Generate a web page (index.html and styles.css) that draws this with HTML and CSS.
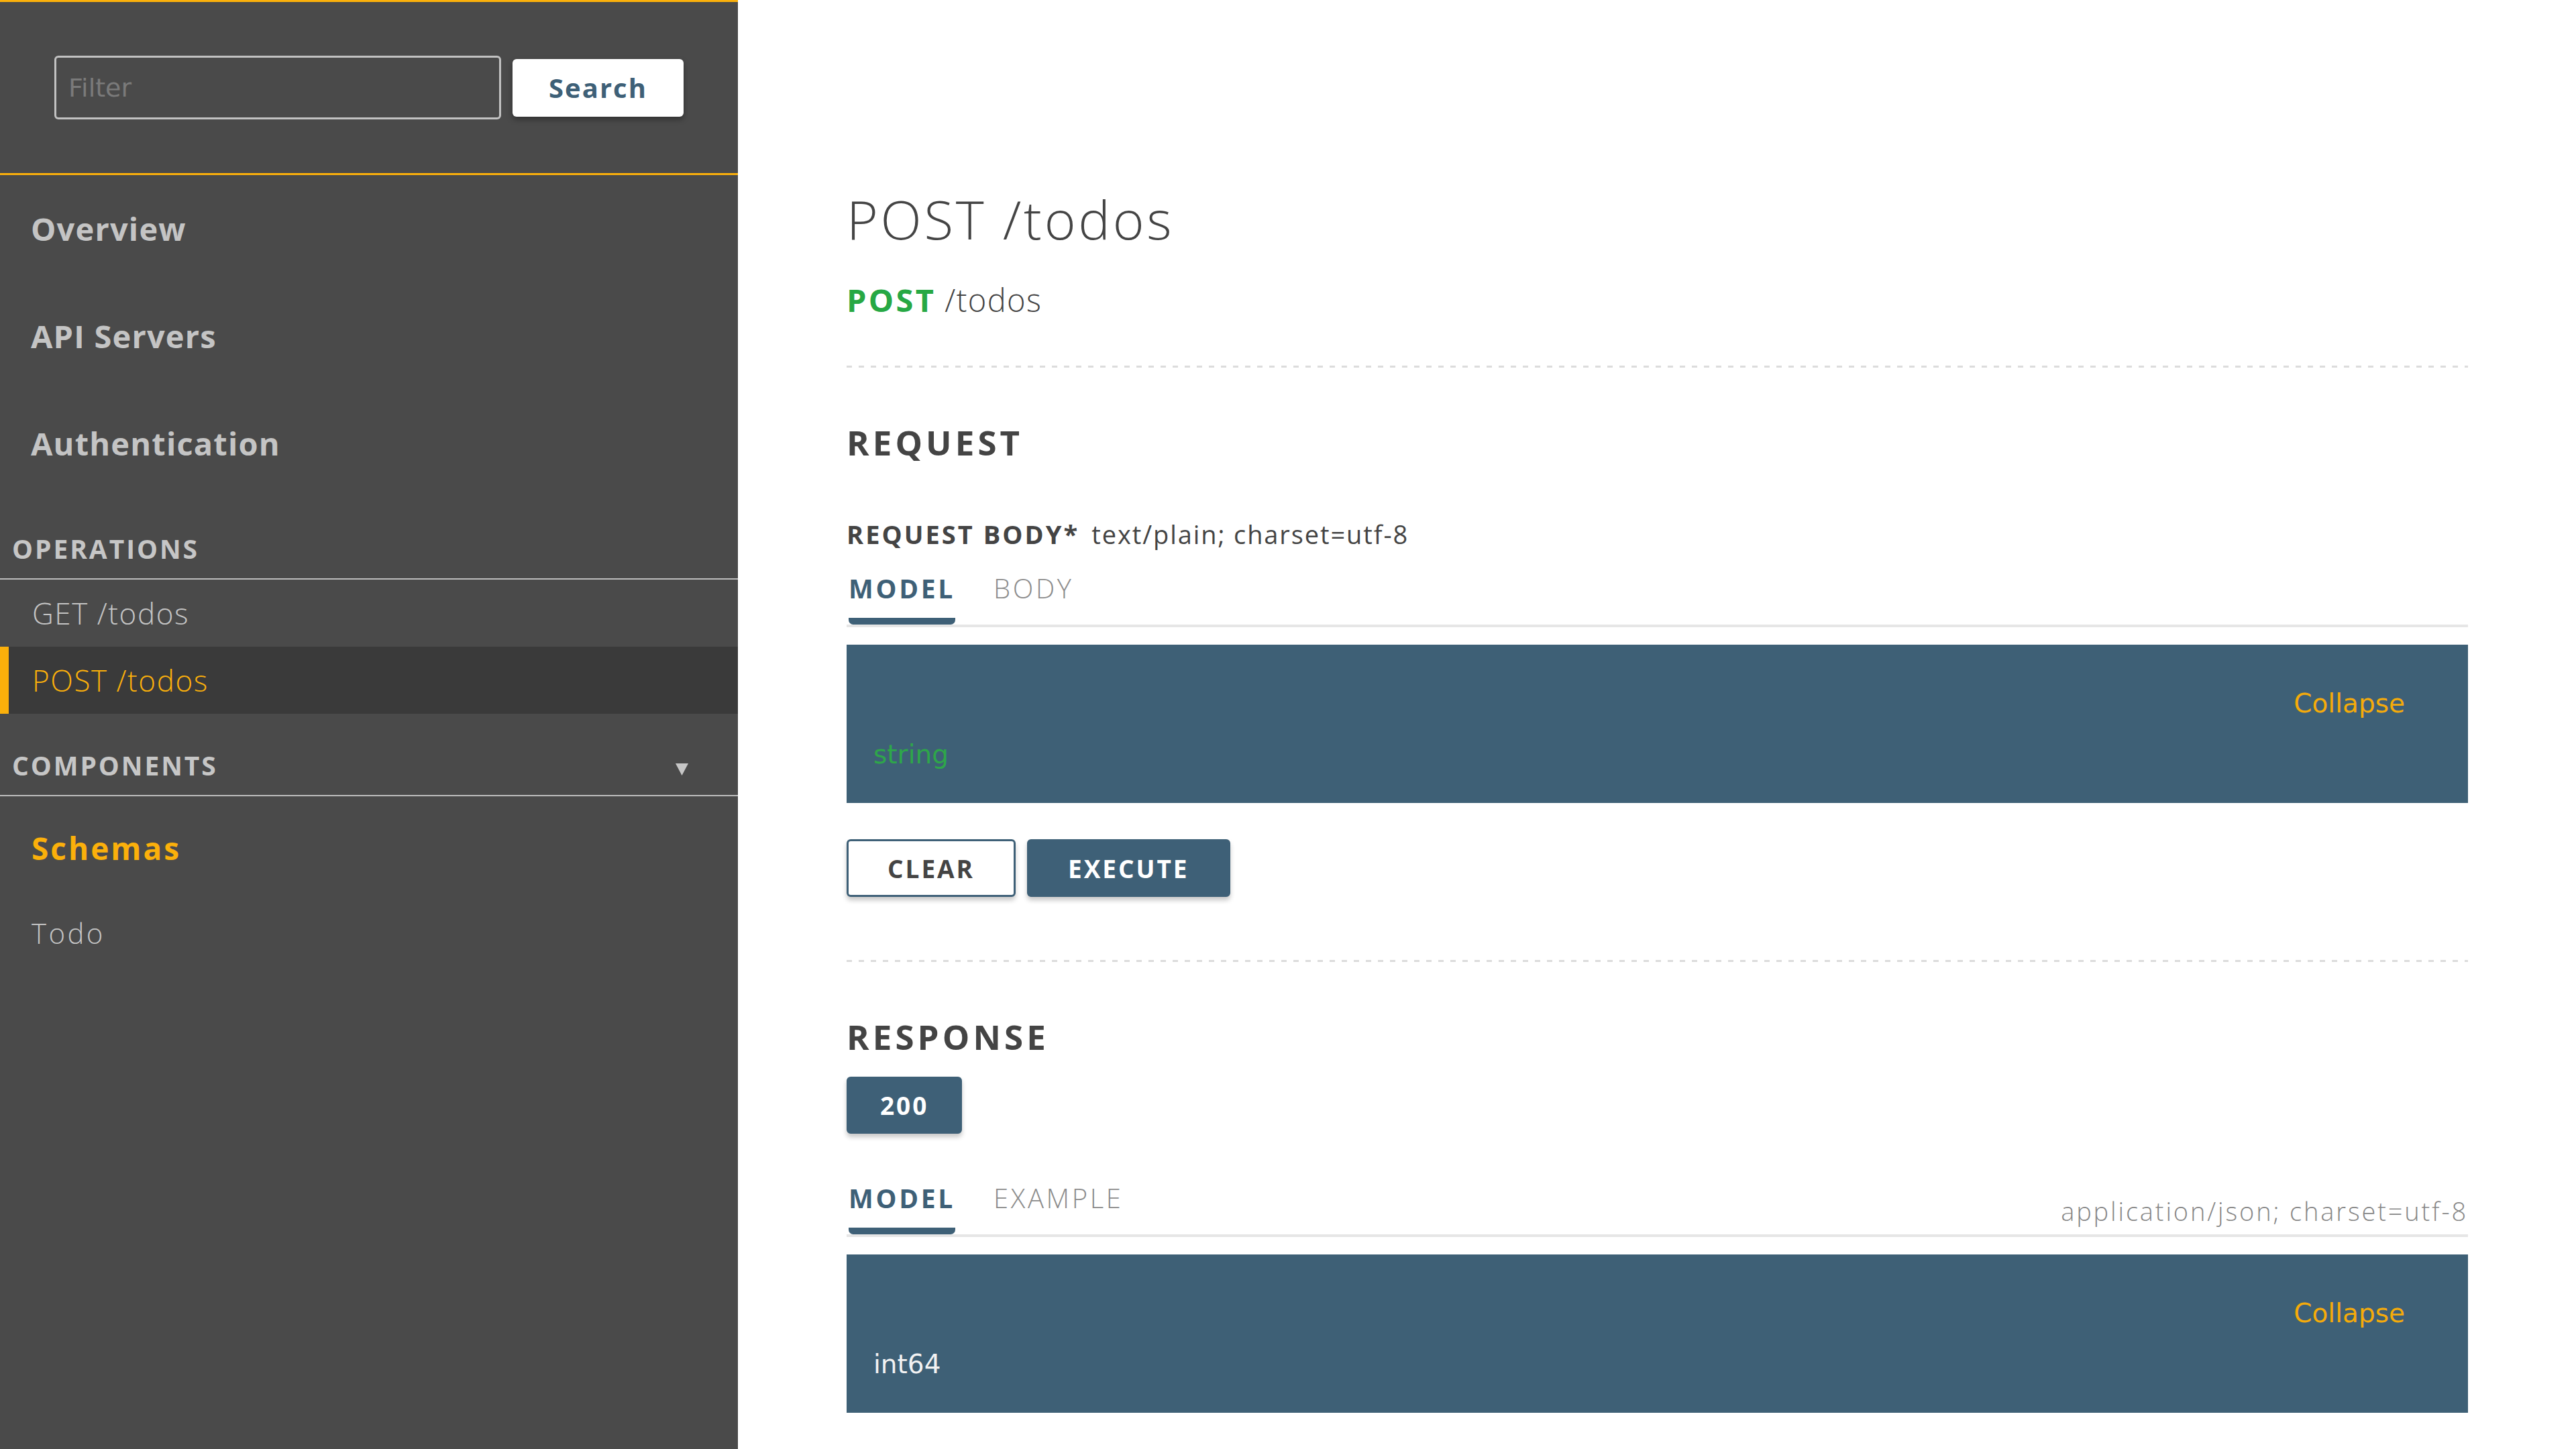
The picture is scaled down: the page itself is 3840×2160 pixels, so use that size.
FILE: index.html
```html
<!DOCTYPE html>
<html lang="en">
<head>
<meta charset="utf-8">
<title>POST /todos</title>
<link rel="stylesheet" href="styles.css">
</head>
<body>
<aside class="sidebar">
  <div class="search-bar">
    <input class="filter" type="text" placeholder="Filter">
    <button class="search-btn">Search</button>
  </div>
  <nav class="nav">
    <div class="nav-item">Overview</div>
    <div class="nav-item">API Servers</div>
    <div class="nav-item">Authentication</div>
    <div class="nav-header">OPERATIONS</div>
    <div class="op-item">GET /todos</div>
    <div class="op-item active">POST /todos</div>
    <div class="nav-header">COMPONENTS
      <svg class="caret" width="19" height="19" viewBox="0 0 19 19"><polygon points="0,1 19,1 9.5,19" fill="#c6c6c6"/></svg>
    </div>
    <div class="schemas">Schemas</div>
    <div class="schema-item">Todo</div>
  </nav>
</aside>
<main class="content">
  <h1 class="title">POST /todos</h1>
  <div class="path"><span class="method">POST</span> <span class="path-text">/todos</span></div>
  <div class="dots"></div>

  <h2 class="section">REQUEST</h2>
  <div class="body-label"><span class="label-strong">REQUEST BODY*</span><span class="mime">text/plain; charset=utf-8</span></div>
  <div class="tabs">
    <span class="tab active">MODEL</span>
    <span class="tab">BODY</span>
  </div>
  <div class="model-panel">
    <div class="collapse">Collapse</div>
    <div class="type type-string">string</div>
  </div>
  <div class="actions">
    <button class="btn btn-outline">CLEAR</button>
    <button class="btn btn-fill">EXECUTE</button>
  </div>
  <div class="dots dots-second"></div>

  <h2 class="section section-response">RESPONSE</h2>
  <button class="btn btn-fill status">200</button>
  <div class="tabs tabs-response">
    <span class="tab active">MODEL</span>
    <span class="tab">EXAMPLE</span>
    <span class="mime mime-right">application/json; charset=utf-8</span>
  </div>
  <div class="model-panel">
    <div class="collapse">Collapse</div>
    <div class="type type-int">int64</div>
  </div>
</main>
</body>
</html>
```
FILE: styles.css
```css
html, body {
  margin: 0;
  padding: 0;
}

body {
  display: flex;
  min-height: 2160px;
  background: #ffffff;
  font-family: "Open Sans", "Liberation Sans", sans-serif;
  letter-spacing: 0.05em;
  color: #444444;
}

/* ---------- Sidebar ---------- */
.sidebar {
  width: 1100px;
  flex: 0 0 1100px;
  background: #4a4a4a;
  color: #c4c4c4;
  min-height: 2160px;
}

.search-bar {
  box-sizing: border-box;
  height: 261px;
  border-top: 3px solid #fbb00b;
  border-bottom: 3px solid #fbb00b;
  display: flex;
  align-items: center;
  gap: 17px;
  padding: 0 81px;
}

.filter {
  box-sizing: border-box;
  width: 666px;
  height: 95px;
  background: transparent;
  border: 3px solid #c2c2c2;
  border-radius: 6px;
  padding: 0 0 0 18px;
  font-family: "DejaVu Sans", sans-serif;
  font-size: 38px;
  letter-spacing: 0;
  color: #dddddd;
  outline: none;
}

.filter::placeholder {
  color: #7a7a7a;
}

.search-btn {
  box-sizing: border-box;
  width: 255px;
  height: 86px;
  background: #ffffff;
  border: none;
  border-radius: 6px;
  box-shadow: 0 4px 8px rgba(0, 0, 0, 0.35);
  font-family: "Open Sans", sans-serif;
  font-weight: 700;
  font-size: 40px;
  letter-spacing: 0.05em;
  color: #3e6077;
  padding: 0;
}

.nav-item {
  height: 160px;
  line-height: 160px;
  padding-left: 46px;
  font-size: 47px;
  font-weight: 700;
  letter-spacing: 0.025em;
  color: #c4c4c4;
}

.nav-header {
  display: flex;
  align-items: center;
  justify-content: space-between;
  padding: 33px 74px 0 18px;
  height: 88px;
  line-height: 88px;
  font-size: 39px;
  font-weight: 700;
  letter-spacing: 0.075em;
  color: #c6c6c6;
  border-bottom: 2px solid #bdbdbd;
}

.caret {
  display: block;
  margin-top: 10px;
}

.op-item {
  height: 100px;
  line-height: 100px;
  padding-left: 48px;
  font-size: 44px;
  font-weight: 300;
  letter-spacing: 0.035em;
  color: #c4c4c4;
}

.op-item.active {
  background: #3a3a3a;
  color: #fbb00b;
  box-shadow: inset 13px 0 0 #fbb00b;
}

.schemas {
  height: 154px;
  line-height: 154px;
  padding-left: 47px;
  font-size: 46px;
  font-weight: 700;
  letter-spacing: 0.065em;
  color: #fbb00b;
}

.schema-item {
  height: 100px;
  line-height: 100px;
  padding-left: 47px;
  font-size: 42px;
  font-weight: 300;
  letter-spacing: 0.08em;
  color: #c4c4c4;
}

/* ---------- Content ---------- */
.content {
  flex: 1 1 auto;
  padding: 278px 161px 0 162px;
  min-width: 0;
}

.title {
  margin: 0;
  font-size: 80px;
  line-height: 96px;
  font-weight: 300;
  letter-spacing: 0.047em;
  color: #444444;
}

.path {
  margin-top: 45px;
  font-size: 47px;
  line-height: 56px;
}

.method {
  font-weight: 700;
  letter-spacing: 0.07em;
  color: #27a844;
}

.path-text {
  font-weight: 300;
  color: #444444;
  letter-spacing: 0.03em;
}

.dots {
  margin-top: 70px;
  height: 3px;
  background: repeating-linear-gradient(to right, #dcdcdc 0, #dcdcdc 8px, transparent 8px, transparent 18px);
}

.dots-second {
  margin-top: 94px;
}

.section {
  margin: 80px 0 0 0;
  font-size: 51px;
  line-height: 62px;
  font-weight: 700;
  letter-spacing: 0.1em;
  color: #444444;
}

.body-label {
  margin-top: 83px;
  font-size: 38px;
  line-height: 46px;
  display: flex;
  align-items: baseline;
}

.label-strong {
  font-weight: 700;
  letter-spacing: 0.08em;
  color: #444444;
}

.mime {
  margin-left: 18px;
  font-weight: 400;
  font-size: 38px;
  letter-spacing: 0.05em;
  color: #444444;
}

.tabs {
  margin-top: 34px;
  display: flex;
  gap: 51px;
  border-bottom: 4px solid #e6e6e6;
}

.tab {
  display: flex;
  flex-direction: column;
  padding: 0 3px;
  font-size: 40px;
  line-height: 48px;
  font-weight: 300;
  letter-spacing: 0.09em;
  color: #8c8c8c;
}

.tab::after {
  content: "";
  display: block;
  height: 10px;
  margin-top: 20px;
  border-radius: 0 0 7px 7px;
}

.tab.active {
  font-size: 39px;
  font-weight: 700;
  letter-spacing: 0.095em;
  color: #3e6077;
}

.tab.active::after {
  background: #3e6077;
}

.model-panel {
  box-sizing: border-box;
  margin-top: 26px;
  height: 236px;
  background: #3e6076;
  padding: 65px 94px 0 40px;
  font-family: "DejaVu Sans", sans-serif;
  font-size: 39px;
  letter-spacing: 0;
}

.collapse {
  text-align: right;
  color: #f5ab0a;
}

.type {
  margin-top: 31px;
}

.type-string {
  color: #2ea64a;
}

.type-int {
  color: #f2f2f2;
}

.actions {
  margin-top: 54px;
  display: flex;
  gap: 17px;
}

.btn {
  box-sizing: border-box;
  height: 86px;
  padding: 0 58px;
  border: 3px solid #3e6077;
  border-radius: 6px;
  font-family: "Open Sans", sans-serif;
  font-size: 37px;
  font-weight: 700;
  letter-spacing: 0.08em;
  box-shadow: 0 5px 7px rgba(0, 0, 0, 0.22);
}

.btn-outline {
  background: #ffffff;
  color: #444444;
}

.btn-fill {
  background: #3e6077;
  color: #ffffff;
}

.status {
  display: block;
  margin-top: 29px;
  height: 85px;
  padding: 0 47px;
}

.tabs-response {
  margin-top: 72px;
}

.mime-right {
  margin-left: auto;
  align-self: flex-end;
  margin-bottom: 12px;
  color: #888888;
  font-weight: 300;
  letter-spacing: 0.075em;
  line-height: 46px;
}
```
